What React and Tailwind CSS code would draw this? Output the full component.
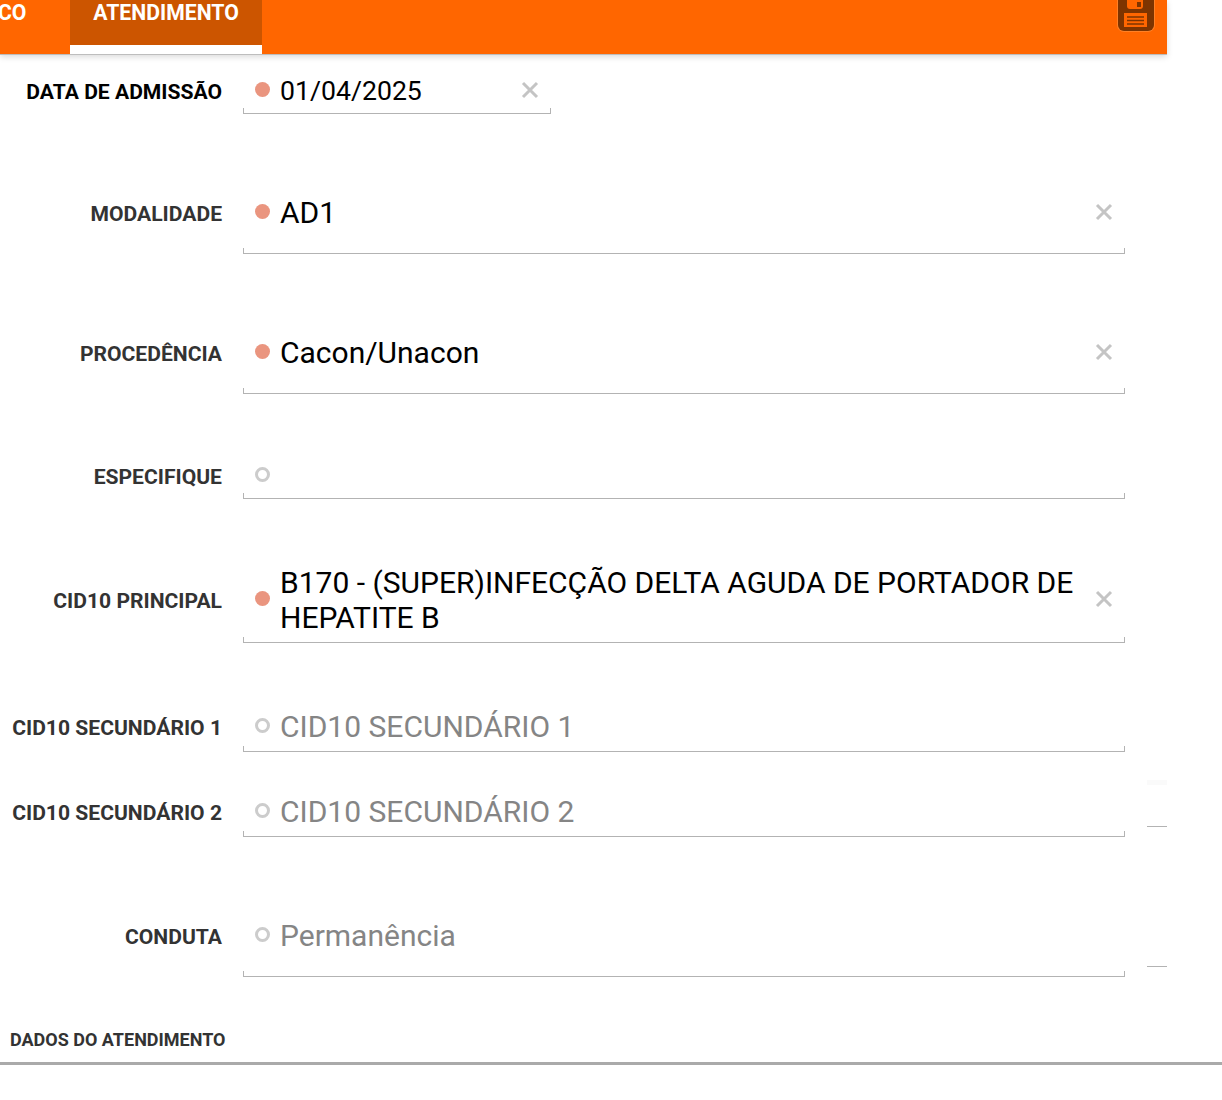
function ClearIcon() {
  return (
    <svg viewBox="0 0 18 18" className="h-[18px] w-[18px] shrink-0" fill="none" stroke="#c4c4c4" strokeWidth="3">
      <path d="M2 2 L16 16 M16 2 L2 16" />
    </svg>
  );
}

function SaveIcon() {
  return (
    <svg viewBox="0 0 38 32" className="h-[32px] w-[38px]">
      <path d="M0 -6 H38 V25 a7 7 0 0 1 -7 7 H7 a7 7 0 0 1 -7 -7 Z" fill="#ff8126" />
      <path d="M1 -6 H37 V25 a6 6 0 0 1 -6 6 H7 a6 6 0 0 1 -6 -6 Z" fill="#7d3400" />
      <rect x="10" y="-6" width="16" height="15" rx="3" fill="#ff6600" />
      <rect x="20" y="2" width="4" height="5" fill="#7d3400" />
      <rect x="7" y="13" width="23" height="14" fill="#ff6600" />
      <path d="M10 17 H27 M10 20.5 H27 M10 24 H27" stroke="#7d3400" strokeWidth="1.3" />
    </svg>
  );
}

function Row({ label, labelClass = "text-[#333]", labelHeight = "h-[36px]", className, fieldClass = "w-[882px]", textClass = "pt-[1px] text-[30px] leading-[35px]", extra = "pb-0", filled, clearable, placeholder, children, side }) {
  return (
    <div className={`flex ${className}`}>
      <div className={`flex w-[222px] shrink-0 items-center justify-end pt-[4px] text-[21.1px] font-bold whitespace-nowrap ${labelHeight} ${labelClass}`}>
        {label}
      </div>
      <div className={`ml-[21px] flex shrink-0 flex-col ${fieldClass}`}>
        <div className={`flex items-center ${extra}`}>
          {filled ? (
            <span className="mb-[2px] ml-[12px] h-[15px] w-[15px] shrink-0 rounded-full bg-[#ea957f]" />
          ) : (
            <span className="mb-[2px] ml-[12px] h-[15px] w-[15px] shrink-0 rounded-full border-[3px] border-[#cccccc]" />
          )}
          <div className={`ml-[10px] min-h-[36px] flex-1 ${textClass} ${placeholder ? "text-[#858585]" : "text-black"}`}>
            {children}
          </div>
          {clearable && (
            <span className="mr-[12px] ml-[10px]">
              <ClearIcon />
            </span>
          )}
        </div>
        <div className="h-[6px] border-x border-b border-[#b3b3b3]" />
      </div>
      {side}
    </div>
  );
}

function SideLine({ faint }) {
  return (
    <div className="ml-[22px] flex w-[20px] shrink-0 flex-col">
      {faint && <div className="-mt-[13px] h-[5px] bg-[#fafafa]" />}
      <div className="mt-auto mb-[10px] h-px bg-[#b3b3b3]" />
    </div>
  );
}

export default function App() {
  return (
    <div className="min-h-[1100px] bg-white font-['Roboto',sans-serif]">
      {/* Top bar */}
      <div className="flex h-[55px] w-[1167px] items-start border-b border-[#bdbdbd] bg-[#ff6600] text-[21.2px] leading-[26px] font-bold text-white shadow-[0_2px_6px_rgba(0,0,0,0.15)]">
        <div className="-ml-[2px] w-[72px]">CO</div>
        <div className="h-[54px] w-[192px] border-b-[9px] border-white bg-[#cc5500] text-center">ATENDIMENTO</div>
        <div className="mr-[12px] ml-auto">
          <SaveIcon />
        </div>
      </div>

      {/* Form */}
      <Row className="mt-[17px]" label="DATA DE ADMISSÃO" labelClass="text-black" fieldClass="w-[308px]" textClass="pt-[2px] text-[26.67px] leading-[34px]" filled clearable>
        01/04/2025
      </Row>
      <Row className="mt-[80px]" label="MODALIDADE" extra="pb-[18px]" filled clearable>
        AD1
      </Row>
      <Row className="mt-[80px]" label="PROCEDÊNCIA" extra="pb-[18px]" filled clearable>
        Cacon/Unacon
      </Row>
      <Row className="mt-[63px]" label="ESPECIFIQUE" />
      <Row className="mt-[66px]" label="CID10 PRINCIPAL" labelHeight="h-[68px]" textClass="-mb-[2px] text-[30px] leading-[35px]" extra="pb-[4px]" filled clearable>
        B170 - (SUPER)INFECÇÃO DELTA AGUDA DE PORTADOR DE HEPATITE B
      </Row>
      <Row className="mt-[65px]" label="CID10 SECUNDÁRIO 1" extra="pb-[2px]" placeholder>
        CID10 SECUNDÁRIO 1
      </Row>
      <Row className="mt-[41px]" label="CID10 SECUNDÁRIO 2" extra="pb-[2px]" placeholder side={<SideLine faint />}>
        CID10 SECUNDÁRIO 2
      </Row>
      <Row className="mt-[80px]" label="CONDUTA" extra="pb-[18px]" placeholder side={<SideLine />}>
        Permanência
      </Row>

      {/* Section title */}
      <div className="mt-[52px] pl-[10px] text-[18px] leading-[22px] font-bold text-[#333]">DADOS DO ATENDIMENTO</div>
      <div className="mt-[11px] h-[3px] bg-[#aaaaaa]" />
    </div>
  );
}
